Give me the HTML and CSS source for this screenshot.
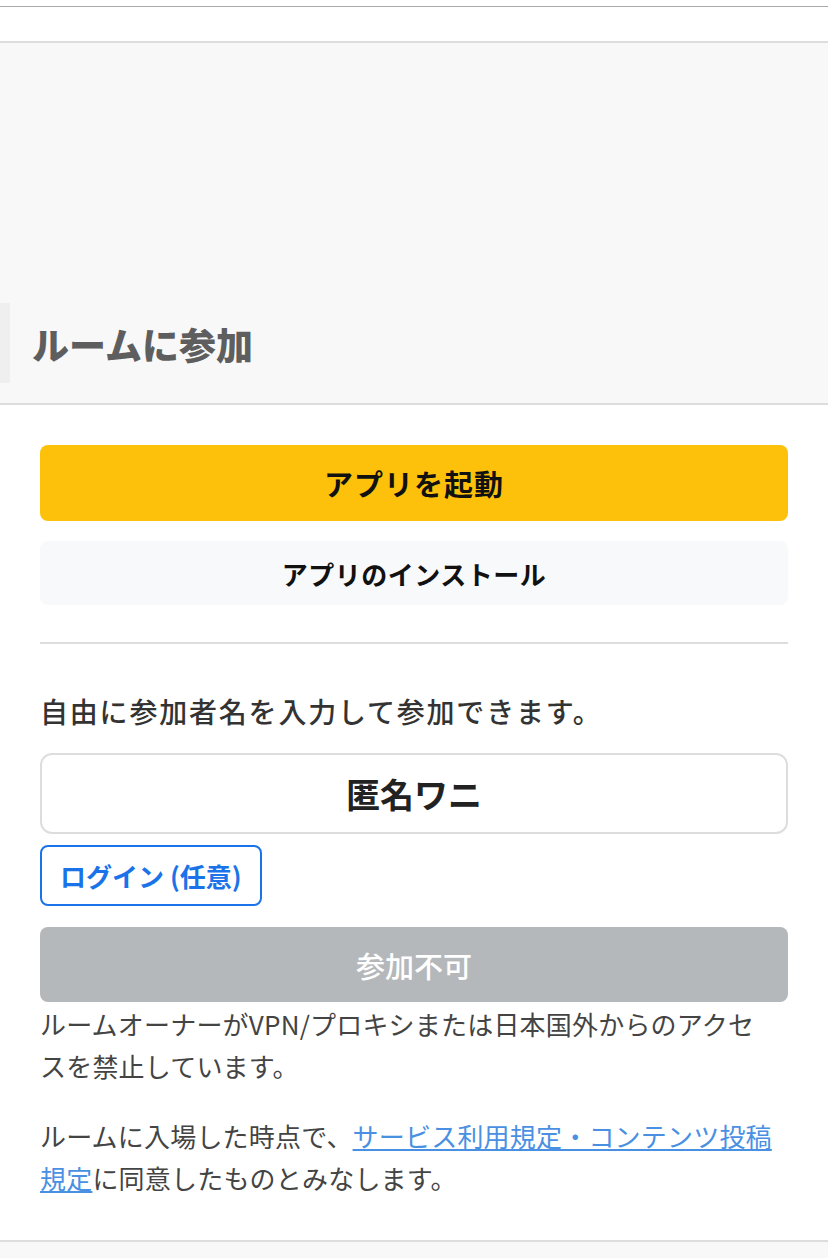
FILE: index.html
```html
<!DOCTYPE html>
<html lang="ja">

<head>
    <meta charset="UTF-8" />
    <meta name="viewport" content="width=device-width, initial-scale=1.0" />
    <title>ルームに参加</title>
    <link rel="stylesheet" href="styles.css">
</head>

<body>
    <div class="topbar"></div>

    <header class="room-header">
        <div class="side-tab"></div>
        <h1>ルームに参加</h1>
    </header>

    <main class="content">
        <button class="btn btn-launch">アプリを起動</button>
        <button class="btn btn-install">アプリのインストール</button>

        <hr class="divider">

        <p class="lead">自由に参加者名を入力して参加できます。</p>

        <input type="text" class="name-input" value="匿名ワニ">

        <button class="btn btn-login">ログイン (任意)</button>

        <button class="btn btn-join" disabled>参加不可</button>

        <p class="note">ルームオーナーがVPN/プロキシまたは日本国外からのアクセスを禁止しています。</p>

        <p class="note terms">ルームに入場した時点で、<a href="#">サービス利用規定・コンテンツ投稿規定</a>に同意したものとみなします。</p>
    </main>

    <footer class="bottom"></footer>
</body>

</html>
```

FILE: styles.css
```css
body {
    font-family: "Noto Sans CJK JP", "Noto Sans", sans-serif;
    margin: 0;
    padding: 0;
    color: #333;
    background: #fff;
}

.topbar {
    height: 34px;
    margin-top: 6px;
    border-top: 1px solid #aaa;
    border-bottom: 2px solid #ddd;
}

.room-header {
    background: #f8f8f8;
    height: 362px;
    border-bottom: 2px solid #ddd;
    display: flex;
    align-items: flex-end;
    padding-bottom: 20px;
    box-sizing: border-box;
}

.side-tab {
    width: 10px;
    height: 80px;
    background: #efefef;
}

.room-header h1 {
    margin: 0 0 0 22px;
    font-size: 37px;
    font-weight: 900;
    color: #5e5e5e;
    line-height: 78px;
}

.content {
    padding: 40px 40px 41px;
    display: flex;
    flex-direction: column;
    align-items: stretch;
}

.btn {
    font-family: inherit;
    border: none;
    cursor: pointer;
    font-weight: bold;
    border-radius: 8px;
}

.btn-launch {
    background: #fdc10b;
    color: #111;
    height: 76px;
    font-size: 29px;
    letter-spacing: 1px;
}

.btn-install {
    margin-top: 20px;
    background: #f8f9fa;
    color: #111;
    height: 64px;
    font-size: 26px;
    letter-spacing: 0.5px;
}

.divider {
    border: none;
    border-top: 2px solid #ddd;
    margin: 37px 0 0;
}

.lead {
    margin: 47px 0 0;
    font-size: 28px;
    letter-spacing: 1.8px;
    font-weight: 500;
    color: #333;
    line-height: 40px;
}

.name-input {
    margin-top: 22px;
    height: 81px;
    box-sizing: border-box;
    border: 2px solid #ddd;
    border-radius: 12px;
    text-align: center;
    font-family: inherit;
    font-size: 34px;
    font-weight: bold;
    color: #222;
    outline: none;
}

.btn-login {
    align-self: flex-start;
    margin-top: 11px;
    height: 61px;
    padding: 0 18px;
    background: #fff;
    border: 2px solid #1a73e8;
    color: #1a73e8;
    font-size: 26px;
}

.btn-join {
    margin-top: 21px;
    height: 75px;
    background: #b5b8bb;
    color: #fff;
    font-size: 29px;
    font-weight: 500;
    cursor: default;
}

.note {
    margin: 1px 0 0;
    padding-right: 12px;
    font-size: 26px;
    letter-spacing: 0.2px;
    line-height: 42px;
    color: #444;
}

.terms {
    margin-top: 28px;
}

.terms a {
    color: #4a90e2;
    text-decoration: underline;
}

.bottom {
    border-top: 2px solid #ddd;
    background: #f8f8f8;
    height: 20px;
}
```
